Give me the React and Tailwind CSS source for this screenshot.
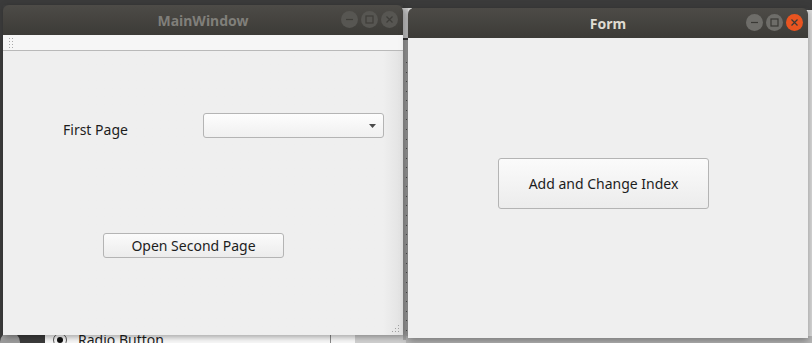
import React from 'react';

const font = { fontFamily: '"Noto Sans", "DejaVu Sans", sans-serif' };

const TitleButton = ({ kind, active }) => {
  const bg = kind === 'close' && active
    ? 'bg-[#e95420]'
    : active ? 'bg-[#6e6d69]' : 'bg-[#575652]';
  const stroke = active ? '#3a3935' : '#3e3d39';
  return (
    <div className={`w-[17px] h-[17px] rounded-full ${bg} flex items-center justify-center`}>
      <svg width="9" height="9" viewBox="0 0 9 9" fill="none" stroke={stroke} strokeWidth="1.2">
        {kind === 'min' && <path d="M1 4.5h7" />}
        {kind === 'max' && <rect x="1" y="1" width="7" height="7" />}
        {kind === 'close' && <path d="M1.5 1.5l6 6M7.5 1.5l-6 6" />}
      </svg>
    </div>
  );
};

const TitleBar = ({ title, active }) => (
  <div className="h-[30px] rounded-t-[6px] bg-gradient-to-b from-[#4d4b47] to-[#3c3b37] flex items-center relative">
    <div
      className={`flex-1 text-center font-bold text-[14px] ${active ? 'text-[#dfdbd2]' : 'text-[#807f7a]'}`}
    >
      {title}
    </div>
    <div className="absolute right-[5px] top-[6px] flex gap-[3px]">
      <TitleButton kind="min" active={active} />
      <TitleButton kind="max" active={active} />
      <TitleButton kind="close" active={active} />
    </div>
  </div>
);

const QtButton = ({ children, className }) => (
  <div
    className={`border border-[#b4b4b4] rounded-[3px] bg-gradient-to-b from-[#fbfbfb] to-[#ececec] flex items-center justify-center text-[14px] text-[#1d1d1d] ${className}`}
  >
    {children}
  </div>
);

export default function App() {
  return (
    <div className="w-[812px] h-[343px] relative overflow-hidden bg-[#3b3b3b]" style={font}>
      {/* desktop behind: Qt Designer fragments */}
      <div className="absolute left-[45px] top-[330px] w-[310px] h-[13px] bg-[#f7f7f7] flex items-center gap-[11px] pl-[8px]">
        <div className="w-[14px] h-[14px] rounded-full border border-[#555] flex items-center justify-center mt-[6px]">
          <div className="w-[6px] h-[6px] rounded-full bg-[#111]" />
        </div>
        <span className="text-[14px] text-[#1d1d1d] leading-none mt-[6px]">Radio Button</span>
      </div>
      <div className="absolute left-[330px] top-[330px] w-px h-[13px] bg-[#888]" />
      <div className="absolute left-[355px] top-[330px] w-[60px] h-[13px] bg-[#cfcfcf]" />
      <div className="absolute left-0 top-[332px] w-[20px] h-[20px] rounded-full bg-[#9a9a9a]" />
      <div className="absolute left-[403px] top-[40px] w-[6px] h-[300px] bg-[#a9a9a9] flex flex-col items-center gap-[9px] pt-[22px]">
        {Array.from({ length: 30 }).map((_, i) => (
          <div key={i} className="w-px h-px bg-[#555]" />
        ))}
      </div>
      <div className="absolute left-[400px] top-[8px] w-[12px] h-[30px] bg-[#d8d8d8]" />
      <div className="absolute left-[806px] top-[10px] w-[6px] h-[333px] bg-[#dcdcdc]" />
      <div className="absolute left-[406px] top-[336px] w-[406px] h-[7px] bg-[#b8b8b8]" />

      {/* MainWindow */}
      <div className="absolute left-[3px] top-[5px] w-[400px] h-[330px] flex flex-col shadow-[2px_2px_6px_rgba(0,0,0,0.35)]">
        <TitleBar title="MainWindow" active={false} />
        <div className="h-[16px] bg-[#f6f6f6] border-b border-[#b9b9b9] flex items-center pl-[6px]">
          <div className="grid grid-cols-2 gap-[2px]">
            {Array.from({ length: 8 }).map((_, i) => (
              <div key={i} className="w-px h-px bg-[#aaa]" />
            ))}
          </div>
        </div>
        <div className="flex-1 bg-[#efefef] relative bg-gradient-to-r from-[#efefef] from-[95%] to-[#e2e2e2]">
          <div className="flex items-center pt-[60px] pl-[60px]">
            <span className="text-[14px] text-[#1d1d1d] w-[140px] mt-[8px]">First Page</span>
            <div className="w-[181px] h-[25px] border border-[#b4b4b4] rounded-[3px] bg-gradient-to-b from-[#fdfdfd] to-[#f0f0f0] flex items-center justify-end pr-[7px]">
              <svg width="7" height="4" viewBox="0 0 7 4">
                <path d="M0 0h7L3.5 4z" fill="#4a4a4a" />
              </svg>
            </div>
          </div>
          <div className="pl-[100px] pt-[93px]">
            <QtButton className="w-[181px] h-[25px]">Open Second Page</QtButton>
          </div>
          <div className="absolute right-[4px] bottom-[3px] grid grid-cols-3 gap-[2px]">
            {[0, 0, 1, 0, 1, 1, 1, 1, 1].map((v, i) => (
              <div key={i} className={`w-px h-px ${v ? 'bg-[#a0a0a0]' : ''}`} />
            ))}
          </div>
        </div>
      </div>

      {/* Form */}
      <div className="absolute left-[408px] top-[8px] w-[400px] h-[330px] flex flex-col shadow-[0_3px_8px_rgba(0,0,0,0.35)]">
        <TitleBar title="Form" active />
        <div className="flex-1 bg-[#efefef] pt-[120px] pl-[90px]">
          <QtButton className="w-[211px] h-[51px]">Add and Change Index</QtButton>
        </div>
      </div>
    </div>
  );
}
